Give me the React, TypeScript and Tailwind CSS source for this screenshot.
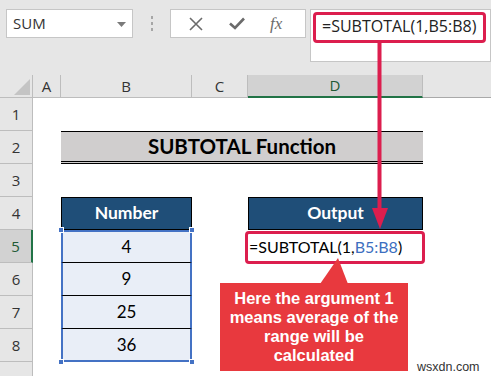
import React from "react";

const ui = { fontFamily: '"Open Sans", "Noto Sans", sans-serif' };
const cal = { fontFamily: 'Lato, "Open Sans", sans-serif' };

const cols = ["A", "B", "C", "D"];
const rows = [1, 2, 3, 4, 5, 6, 7, 8, 9];
const nums = ["4", "9", "25", "36"];

function Toolbar() {
    return (
        <div className="flex items-start h-[75px] pt-[9px] pl-[6px] bg-[#e6e6e6]" style={ui}>
            <div className="relative flex items-center w-[127px] h-[29px] bg-white border border-[#c6c6c6] pl-[6px] text-[15px] text-[#333]">
                SUM
                <svg className="absolute left-[110px] top-[12px]" width="9" height="5" viewBox="0 0 9 5">
                    <path d="M0 0 H9 L4.5 5 Z" fill="#7a7a7a" />
                </svg>
            </div>
            <div className="w-[37px] h-[29px] flex flex-col items-center justify-center gap-[3px]">
                <span className="w-[2px] h-[3px] bg-[#a6a6a6]" />
                <span className="w-[2px] h-[3px] bg-[#a6a6a6]" />
                <span className="w-[2px] h-[3px] bg-[#a6a6a6]" />
            </div>
            <div className="flex items-center w-[136px] h-[29px] bg-white border border-[#c6c6c6]">
                <svg className="ml-[18px]" width="14" height="14" viewBox="0 0 14 14">
                    <path d="M1 1 L13 13 M13 1 L1 13" stroke="#6b6b6b" strokeWidth="1.6" />
                </svg>
                <svg className="ml-[26px]" width="16" height="13" viewBox="0 0 16 13">
                    <path d="M1 6.5 L6 11 L15 1.5" stroke="#6b6b6b" strokeWidth="2.6" fill="none" />
                </svg>
                <span className="ml-[25px] text-[17px] italic text-[#6b6b6b]" style={{ fontFamily: '"Liberation Serif", serif' }}>
                    fx
                </span>
            </div>
            <div className="ml-[4px] flex-1 h-[53px] bg-white border border-[#c6c6c6] pl-[11px] pt-[3px] text-[16px] text-[#222] leading-[26px]">
                =SUBTOTAL(1,B5:B8)
            </div>
        </div>
    );
}

function Sheet() {
    return (
        <div className="grid grid-cols-[33px_28px_131px_56px_175px_1fr] grid-rows-[23px_repeat(9,33px)] bg-white">
            {/* header row */}
            <div className="bg-[#e6e6e6] border-r border-b border-[#bdbdbd] flex items-end justify-end p-[2px]">
                <svg width="16" height="16" viewBox="0 0 16 16">
                    <path d="M16 0 V16 H0 Z" fill="#c4c4c4" />
                </svg>
            </div>
            {cols.map((c) => (
                <div
                    key={c}
                    className={
                        c === "D"
                            ? "bg-[#d2d2d2] border-r border-[#bdbdbd] border-b-2 border-b-[#217346] flex items-center justify-center text-[15px] text-[#215a35]"
                            : "bg-[#e6e6e6] border-r border-b border-[#bdbdbd] flex items-center justify-center text-[15px] text-[#333]"
                    }
                    style={ui}
                >
                    {c}
                </div>
            ))}
            <div className="bg-[#e6e6e6] border-b border-[#a9a9a9]" />

            {rows.map((r) => (
                <React.Fragment key={r}>
                    <div
                        className={
                            r === 5
                                ? "bg-[#d2d2d2] border-b border-[#bdbdbd] border-r-2 border-r-[#217346] flex items-center justify-center text-[15px] text-[#215a35]"
                                : "bg-[#e6e6e6] border-b border-r border-[#bdbdbd] flex items-center justify-center text-[15px] text-[#333]"
                        }
                        style={ui}
                    >
                        {r < 9 ? r : ""}
                    </div>
                    <div />
                    {r === 2 ? (
                        <div
                            className="col-span-3 bg-[#d0cece] border-t border-black border-b-[3px] border-b-black border-double flex items-center justify-center text-[20.5px] font-bold text-black"
                            style={cal}
                        >
                            SUBTOTAL Function
                        </div>
                    ) : r === 4 ? (
                        <>
                            <div className="bg-[#1f4e78] border border-black flex items-center justify-center text-[17.5px] font-bold text-white" style={cal}>
                                Number
                            </div>
                            <div />
                            <div className="bg-[#1f4e78] border border-black flex items-center justify-center text-[17.5px] font-bold text-white" style={cal}>
                                Output
                            </div>
                        </>
                    ) : r >= 5 && r <= 8 ? (
                        <>
                            <div
                                className={
                                    "bg-[#e9eef7] flex items-center justify-center text-[17px] text-black border-x-2 border-[#4472c4] " +
                                    (r === 5 ? "border-t-2 border-t-[#4472c4] " : "") +
                                    (r === 8 ? "border-b-2 border-b-[#4472c4]" : "border-b border-b-black")
                                }
                                style={cal}
                            >
                                {nums[r - 5]}
                            </div>
                            <div />
                            {r === 5 ? (
                                <div className="flex items-center pl-[1px] text-[16px] text-black" style={cal}>
                                    =SUBTOTAL(1,<span className="text-[#3d6fc0]">B5:B8</span>)
                                </div>
                            ) : (
                                <div />
                            )}
                        </>
                    ) : (
                        <>
                            <div />
                            <div />
                            <div />
                        </>
                    )}
                    <div />
                </React.Fragment>
            ))}
        </div>
    );
}

export default function App() {
    return (
        <div className="relative w-[491px] h-[376px] overflow-hidden bg-white">
            <Toolbar />
            <Sheet />

            {/* selection handles */}
            <span className="absolute left-[58px] top-[227px] w-[6px] h-[6px] bg-[#4472c4] border border-white" />
            <span className="absolute left-[189px] top-[227px] w-[6px] h-[6px] bg-[#4472c4] border border-white" />
            <span className="absolute left-[58px] top-[359px] w-[6px] h-[6px] bg-[#4472c4] border border-white" />
            <span className="absolute left-[189px] top-[359px] w-[6px] h-[6px] bg-[#4472c4] border border-white" />

            {/* red highlight boxes */}
            <div className="absolute left-[313px] top-[12px] w-[173px] h-[31px] border-[3px] border-[#dc1e4e] rounded-[4px]" />
            <div className="absolute left-[245px] top-[231px] w-[180px] h-[33px] border-[3px] border-[#dc1e4e] rounded-[4px]" />

            <svg className="absolute left-0 top-0" width="491" height="376" viewBox="0 0 491 376">
                <path d="M379.5 43 V212" stroke="#dc1e4e" strokeWidth="4" />
                <path d="M372 208 L388 208 L380 229 Z" fill="#dc1e4e" />
                <path d="M320 284 L338 258 L348 284 Z" fill="#e8393e" />
            </svg>

            {/* callout */}
            <div
                className="absolute left-[220px] top-[283px] w-[188px] h-[88px] bg-[#e8393e] flex items-center justify-center text-center text-white font-bold text-[16.5px] leading-[19px]"
                style={{ fontFamily: '"Liberation Sans", Arial, sans-serif' }}
            >
                Here the argument 1<br />means average of the<br />range will be<br />calculated
            </div>

            <div className="absolute left-[417px] top-[358px] text-[12.5px] text-[#333]" style={{ fontFamily: '"Liberation Sans", Arial, sans-serif' }}>
                wsxdn.com
            </div>
        </div>
    );
}
